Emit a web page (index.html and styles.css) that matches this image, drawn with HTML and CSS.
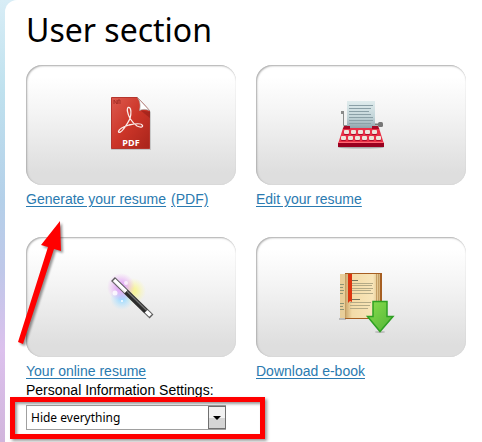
FILE: index.html
```html
<!DOCTYPE html>
<html lang="en">
<head>
  <meta charset="UTF-8">
  <meta name="viewport" content="width=device-width, initial-scale=1.0">
  <title>User section</title>
  <link rel="stylesheet" href="styles.css">
</head>
<body>
  <main class="panel">
    <h1>User section</h1>
    <div class="tiles">
      <div class="tile">
        <a class="card" href="#pdf" aria-label="PDF">
          <svg width="44" height="56" viewBox="0 0 44 56">
            <defs>
              <linearGradient id="pdf-red" x1="0" y1="0" x2="1" y2="1">
                <stop offset="0" stop-color="#dc5a4e"/>
                <stop offset="0.5" stop-color="#cc3528"/>
                <stop offset="1" stop-color="#a8241b"/>
              </linearGradient>
            </defs>
            <path d="M2 2h27l13 13v38H2z" fill="#777" opacity="0.3"/>
            <path d="M2.500 0.500h26l12 13v38h-38z" fill="url(#pdf-red)" stroke="#b5352c"/>
            <path d="M31 13l10 2v6z" fill="#8c1a14" opacity="0.5"/>
            <path d="M28.500 0.500l12 13c-4-1.500-7-1.500-10 0c1-4 1-9-2-13z" fill="#fff" stroke="#a9a19e" stroke-width="0.700"/>
            <path d="M5 7V3l3 4V3M9 7V3h2v4" fill="none" stroke="#9c2a22" stroke-width="0.800"/>
            <path d="M21 21.500c1-4 1.500-9-.5-11c-2-1-2.500 2-2 4c.5 3 1.500 5 2.500 7c2 3 4 5.500 7 7.500c3 1.500 6 1.500 5.500-.5c-1-2.500-9-1.500-13.500-.5c-5 1.500-10 4-10.500 6.500c0 2 3 .5 5-2.500c3-4 5-7 6.500-10.500z" fill="none" stroke="#faece9" stroke-width="1.300"/>
            <text class="pdf-text" x="22" y="49" text-anchor="middle">PDF</text>
          </svg>
        </a>
        <div class="links"><a href="#resume">Generate your resume</a><a href="#pdf">(PDF)</a></div>
      </div>

      <div class="tile">
        <a class="card" href="#edit" aria-label="Edit">
          <svg width="48" height="48" viewBox="0 0 48 48">
            <defs>
              <linearGradient id="paper" x1="0" y1="0" x2="0" y2="1">
                <stop offset="0" stop-color="#e0eced"/>
                <stop offset="0.6" stop-color="#c3d5d9"/>
                <stop offset="1" stop-color="#8fa4ac"/>
              </linearGradient>
            </defs>
            <ellipse cx="24" cy="46.500" rx="23" ry="1" fill="#aaa"/>
            <path d="M6.500 12v12.500h4" fill="none" stroke="#8b8b8b"/>
            <rect x="4" y="10" width="3" height="3" fill="#8b8b8b"/>
            <path d="M36 23.500h6" stroke="#777" stroke-width="2"/>
            <rect x="41" y="21" width="5" height="5" rx="1.500" fill="#777"/>
            <path d="M7 25h34l1 4H6z" fill="#a80725"/>
            <rect x="10" y="0" width="28" height="27" fill="url(#paper)"/>
            <path d="M12 4.500h24M12 7.500h22M12 10.500h20M12 13.500h22M12 16.500h24M12 19.500h24M12 22.500h22" stroke="#8ba0a7"/>
            <path d="M6 27h36l5 16H1z" fill="#e92f46"/>
            <path d="M7 25h6v3H6zM35 25h6l1 3h-7z" fill="#a80725"/>
            <path d="M1 42h46v4H1z" fill="#99001f"/>
            <path d="M1 41.500h46" stroke="#ff6975"/>
            <g fill="#a90b29">
              <rect x="7" y="30" width="5" height="4" rx="1"/><rect x="14" y="30" width="5" height="4" rx="1"/><rect x="21" y="30" width="5" height="4" rx="1"/><rect x="28" y="30" width="5" height="4" rx="1"/><rect x="35" y="30" width="5" height="4" rx="1"/>
              <rect x="4" y="36" width="5" height="4" rx="1"/><rect x="11" y="36" width="5" height="4" rx="1"/><rect x="18" y="36" width="5" height="4" rx="1"/><rect x="25" y="36" width="5" height="4" rx="1"/><rect x="32" y="36" width="5" height="4" rx="1"/><rect x="39" y="36" width="5" height="4" rx="1"/>
            </g>
            <g fill="#ece4da">
              <rect x="7" y="29" width="5" height="4" rx="1"/><rect x="14" y="29" width="5" height="4" rx="1"/><rect x="21" y="29" width="5" height="4" rx="1"/><rect x="28" y="29" width="5" height="4" rx="1"/><rect x="35" y="29" width="5" height="4" rx="1"/>
              <rect x="4" y="35" width="5" height="4" rx="1"/><rect x="11" y="35" width="5" height="4" rx="1"/><rect x="18" y="35" width="5" height="4" rx="1"/><rect x="25" y="35" width="5" height="4" rx="1"/><rect x="32" y="35" width="5" height="4" rx="1"/><rect x="39" y="35" width="5" height="4" rx="1"/>
            </g>
          </svg>
        </a>
        <div class="links"><a href="#edit">Edit your resume</a></div>
      </div>

      <div class="tile">
        <a class="card" href="#online" aria-label="Online resume">
          <svg width="48" height="48" viewBox="0 0 48 48">
            <defs>
              <radialGradient id="glow-pink"><stop offset="0.3" stop-color="#e2a8f5" stop-opacity="0.9"/><stop offset="1" stop-color="#eeb4f6" stop-opacity="0"/></radialGradient>
              <radialGradient id="glow-blue"><stop offset="0.2" stop-color="#a2dcff"/><stop offset="1" stop-color="#b8e4ff" stop-opacity="0"/></radialGradient>
              <radialGradient id="glow-yellow"><stop offset="0.2" stop-color="#f7f59a"/><stop offset="1" stop-color="#faf7ac" stop-opacity="0"/></radialGradient>
            </defs>
            <circle cx="26" cy="18" r="13" fill="url(#glow-yellow)"/>
            <circle cx="15" cy="25" r="12" fill="url(#glow-blue)"/>
            <circle cx="14" cy="14" r="14" fill="url(#glow-pink)"/>
            <circle cx="8" cy="20" r="2.500" fill="#fff" opacity="0.8"/>
            <circle cx="19" cy="10" r="2" fill="#fff" opacity="0.7"/>
            <circle cx="15" cy="28" r="1" fill="#fff"/>
            <path d="M6 6L44.500 43.500" stroke="#5a5a5a" stroke-width="5.500"/>
            <path d="M7 7L43.500 42.500" stroke="#fff" stroke-width="3.700"/>
            <path d="M19 18.700L39 38.200" stroke="#2c2c2c" stroke-width="5"/>
            <path d="M20 18.200L40 37.700" stroke="#777" stroke-width="1.200"/>
            <path d="M6 8L18 19.700" stroke="#d2ccd2"/>
          </svg>
        </a>
        <div class="links"><a href="#online">Your online resume</a></div>
        <svg class="pointer" width="50" height="130" viewBox="0 0 50 130">
          <path d="M45 3L26 27l7 2L3 124l5 2L39 31l7 2z" fill="#f00"/>
        </svg>
      </div>

      <div class="tile">
        <a class="card" href="#ebook" aria-label="E-book">
          <svg class="book" width="46" height="48" viewBox="0 0 46 48">
            <defs>
              <linearGradient id="page" x1="0" y1="0" x2="1" y2="0">
                <stop offset="0" stop-color="#c9a56a"/>
                <stop offset="0.2" stop-color="#f3dba8"/>
                <stop offset="0.8" stop-color="#f8e5b9"/>
                <stop offset="1" stop-color="#d7b67d"/>
              </linearGradient>
              <linearGradient id="down" x1="0" y1="0" x2="1" y2="1">
                <stop offset="0" stop-color="#8add4d"/>
                <stop offset="1" stop-color="#50b436"/>
              </linearGradient>
            </defs>
            <path d="M1 46h7" stroke="#bbb" stroke-width="2"/>
            <path d="M7 0h37v46H7z" fill="#a65e21"/>
            <path d="M7 1h35v44H7z" fill="url(#page)"/>
            <path d="M2 1h5v44H2z" fill="#e8ce9a"/>
            <path d="M7.500 1v44M38.500 1v44M40.500 1v44" stroke="#c49e64"/>
            <path d="M2 11.500h4M2 14.500h3M2 17.500h4M2 20.500h3M2 30.500h4M2 33.500h3M2 36.500h4" stroke="#8e9475"/>
            <path d="M14 7.500h6M14 26.500h8" stroke="#73735b"/>
            <path d="M14 10.500h21M14 12.500h20M14 15.500h21M14 17.500h19M14 20.500h21M12 29.500h21M12 32.500h20M12 35.500h18" stroke="#b4aa86"/>
            <path d="M10 1h4v28l-2-1-2 2z" fill="#dc3510"/>
            <ellipse cx="42" cy="59" rx="5" ry="1" fill="#bbb"/>
            <path d="M35 28.500h14v15h6L42 58.500 29.500 43.500H35z" fill="url(#down)" stroke="#2fa023" stroke-width="1.500"/>
          </svg>
        </a>
        <div class="links"><a href="#ebook">Download e-book</a></div>
      </div>
    </div>

    <form class="settings">
      <label for="privacy">Personal Information Settings:</label>
      <div class="select-box">
        <select id="privacy">
          <option>Hide everything</option>
        </select>
        <span class="highlight"></span>
      </div>
    </form>
  </main>
</body>
</html>
```

FILE: styles.css
```css
body {
  margin: 0;
  padding-left: 5px;
  background: linear-gradient(#d8edf6 0, #bfe1ee 90px, #b4d0e9 200px, #bfc8e9 270px, #dcc1ed 350px, #d1b5dc 442px);
  font-family: "Liberation Sans", Arial, sans-serif;
  font-size: 14px;
  line-height: 20px;
  color: #000;
}
.panel {
  box-sizing: border-box;
  min-height: 100vh;
  padding: 8px 16px 12px 21px;
  background: #fff;
  border-top-left-radius: 12px;
}
h1 {
  margin: 0 0 13px;
  font-family: "Noto Sans", "Open Sans", sans-serif;
  font-size: 32px;
  font-weight: 400;
  line-height: 44px;
}
.tiles {
  display: grid;
  grid-template-columns: 1fr 1fr;
  gap: 28px 20px;
}
.tile {
  position: relative;
}
.card {
  display: flex;
  align-items: center;
  justify-content: center;
  box-sizing: border-box;
  height: 120px;
  border-radius: 16px;
  background: linear-gradient(#fff 10%, #f4f4f4 40%, #dedede 90%);
  box-shadow: inset 1px 1px 2px #aaa, inset 0 0 1px #ccc;
}
.links {
  display: flex;
  gap: 5px;
  padding-top: 4px;
}
.links a {
  color: #2a7ab0;
  text-underline-offset: 2px;
}
.pdf-text {
  font: bold 9px "Open Sans", sans-serif;
  fill: #fff;
}
/* the download arrow hangs past the book */
.book {
  overflow: visible;
}
.pointer {
  position: absolute;
  left: -11px;
  top: -19px;
  pointer-events: none;
  filter: drop-shadow(2px 2px 1px rgba(0, 0, 0, 0.4));
}
.settings label {
  display: block;
  line-height: 18px;
}
.select-box {
  position: relative;
  width: 200px;
  margin-top: 6px;
}
select {
  display: block;
  width: 100%;
  height: 25px;
  padding: 0 24px 0 4px;
  border: 1px solid #a0a0a0;
  border-radius: 0;
  background: #fff;
  color: #000;
  font: 12px "Noto Sans", sans-serif;
  appearance: none;
}
/* drop-down button */
.select-box::before {
  content: "";
  position: absolute;
  right: 0;
  top: 1px;
  box-sizing: border-box;
  width: 18px;
  height: 23px;
  border: 1px solid #707070;
  background: linear-gradient(#f2f2f2 50%, #d5d5d5 50%);
  pointer-events: none;
}
.select-box::after {
  content: "";
  position: absolute;
  right: 5px;
  top: 11px;
  border: 4px solid transparent;
  border-top-color: #000;
  border-bottom: 0;
  pointer-events: none;
}
.highlight {
  position: absolute;
  inset: -8px -39px -9px -16px;
  border: 5px solid #f00;
  box-shadow: 2px 2px 3px rgba(0, 0, 0, 0.4), inset 2px 2px 3px rgba(0, 0, 0, 0.4);
  pointer-events: none;
}
```
